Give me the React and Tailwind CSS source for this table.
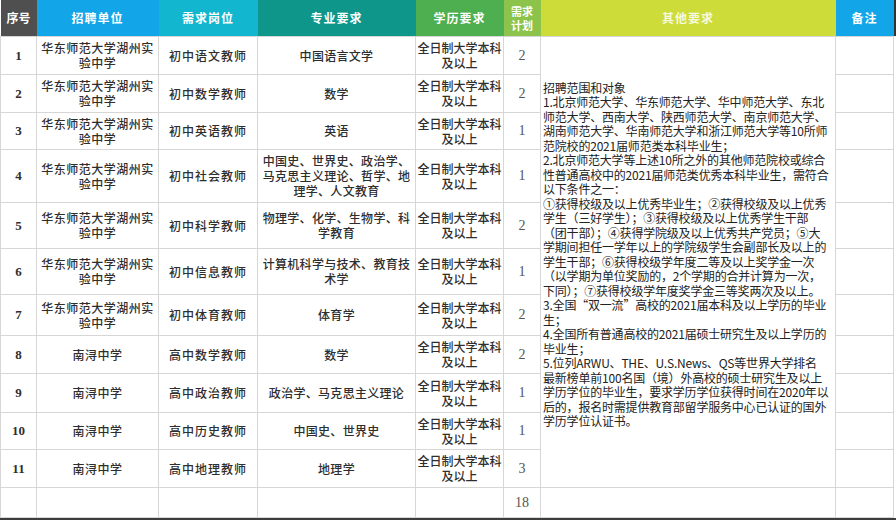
import React from "react";

const rows = [
  { no: 1, unit: ["华东师范大学湖州实", "验中学"], post: "初中语文教师", major: ["中国语言文学"], plan: 2, h: "h-[38px]" },
  { no: 2, unit: ["华东师范大学湖州实", "验中学"], post: "初中数学教师", major: ["数学"], plan: 2, h: "h-[38px]" },
  { no: 3, unit: ["华东师范大学湖州实", "验中学"], post: "初中英语教师", major: ["英语"], plan: 1, h: "h-[37px]" },
  {
    no: 4,
    unit: ["华东师范大学湖州实", "验中学"],
    post: "初中社会教师",
    major: ["中国史、世界史、政治学、", "马克思主义理论、哲学、地", "理学、人文教育"],
    plan: 1,
    h: "h-[53px]",
  },
  { no: 5, unit: ["华东师范大学湖州实", "验中学"], post: "初中科学教师", major: ["物理学、化学、生物学、科", "学教育"], plan: 2, h: "h-[46px]" },
  { no: 6, unit: ["华东师范大学湖州实", "验中学"], post: "初中信息教师", major: ["计算机科学与技术、教育技", "术学"], plan: 1, h: "h-[46px]" },
  { no: 7, unit: ["华东师范大学湖州实", "验中学"], post: "初中体育教师", major: ["体育学"], plan: 2, h: "h-[41px]" },
  { no: 8, unit: ["南浔中学"], post: "高中数学教师", major: ["数学"], plan: 2, h: "h-[38px]" },
  { no: 9, unit: ["南浔中学"], post: "高中政治教师", major: ["政治学、马克思主义理论"], plan: 1, h: "h-[39px]" },
  { no: 10, unit: ["南浔中学"], post: "高中历史教师", major: ["中国史、世界史"], plan: 1, h: "h-[37px]" },
  { no: 11, unit: ["南浔中学"], post: "高中地理教师", major: ["地理学"], plan: 3, h: "h-[38px]" },
];

const other = [
  "招聘范围和对象",
  "1.北京师范大学、华东师范大学、华中师范大学、东北",
  "师范大学、西南大学、陕西师范大学、南京师范大学、",
  "湖南师范大学、华南师范大学和浙江师范大学等10所师",
  "范院校的2021届师范类本科毕业生；",
  "2.北京师范大学等上述10所之外的其他师范院校或综合",
  "性普通高校中的2021届师范类优秀本科毕业生，需符合",
  "以下条件之一：",
  "①获得校级及以上优秀毕业生；②获得校级及以上优秀",
  "学生（三好学生）；③获得校级及以上优秀学生干部",
  "（团干部）；④获得学院级及以上优秀共产党员；⑤大",
  "学期间担任一学年以上的学院级学生会副部长及以上的",
  "学生干部；⑥获得校级学年度二等及以上奖学金一次",
  "（以学期为单位奖励的，2个学期的合并计算为一次，",
  "下同）；⑦获得校级学年度奖学金三等奖两次及以上。",
  "3.全国“双一流”高校的2021届本科及以上学历的毕业",
  "生；",
  "4.全国所有普通高校的2021届硕士研究生及以上学历的",
  "毕业生；",
  "5.位列ARWU、THE、U.S.News、QS等世界大学排名",
  "最新榜单前100名国（境）外高校的硕士研究生及以上",
  "学历学位的毕业生，要求学历学位获得时间在2020年以",
  "后的，报名时需提供教育部留学服务中心已认证的国外",
  "学历学位认证书。",
];

const cjk = { fontFamily: '"Noto Sans CJK SC", "Noto Sans", sans-serif' };
const serif = { fontFamily: '"Liberation Serif", "Noto Sans CJK SC", serif' };

const td = "border border-[#d6d6d6] text-center align-middle p-0 whitespace-nowrap overflow-hidden";

const Lines = ({ items }) =>
  items.map((t, i) => (
    <div key={i} className="whitespace-nowrap">
      {t}
    </div>
  ));

export default function App() {
  return (
    <div className="w-[896px] h-[520px] overflow-hidden bg-white flex flex-col" style={cjk}>
      <table className="table-fixed border-collapse w-[896px] text-[12px] leading-[15px] text-[#2e2e2e] font-medium">
        <colgroup>
          <col className="w-[36px]" />
          <col className="w-[122px]" />
          <col className="w-[99px]" />
          <col className="w-[158px]" />
          <col className="w-[88px]" />
          <col className="w-[37px]" />
          <col className="w-[295px]" />
          <col className="w-[58px]" />
          <col className="w-[3px]" />
        </colgroup>
        <thead>
          <tr className="h-[36px] text-white font-bold text-[12px]">
            <th className="bg-[#4f4f4f] p-0">序号</th>
            <th className="bg-[#12a6e9] p-0 tracking-[1px]">招聘单位</th>
            <th className="bg-[#12b6cf] p-0 tracking-[1px]">需求岗位</th>
            <th className="bg-[#0f968a] p-0 tracking-[1px]">专业要求</th>
            <th className="bg-[#4daf50] p-0 tracking-[1px]">学历要求</th>
            <th className="bg-[#8cc34b] p-0 text-[11px] leading-[14px] font-bold">
              <div>需求</div>
              <div>计划</div>
            </th>
            <th className="bg-[#cddc39] p-0 text-[#f6f9de] tracking-[1px]">其他要求</th>
            <th className="bg-[#12a6e9] p-0 tracking-[1px]">备注</th>
            <th className="bg-[#333333] p-0"></th>
          </tr>
        </thead>
        <tbody>
          {rows.map((r, i) => (
            <tr key={r.no} className={r.h}>
              <td className={`${td} font-bold text-[13px]`} style={serif}>
                {r.no}
              </td>
              <td className={`${td} tracking-[0.5px]`}>
                <Lines items={r.unit} />
              </td>
              <td className={`${td} tracking-[1px]`}>{r.post}</td>
              <td className={`${td} tracking-[0.3px]`}>
                <Lines items={r.major} />
              </td>
              <td className={td}>
                <div>全日制大学本科</div>
                <div>及以上</div>
              </td>
              <td className={`${td} text-[14px] text-[#555] font-normal`} style={serif}>
                {r.plan}
              </td>
              {i === 0 && (
                <td
                  rowSpan={11}
                  className="border border-[#d6d6d6] align-top text-left pt-[44px] pl-[2px] text-[12px] leading-[14.5px] text-[#222] font-normal tracking-[-0.2px]"
                >
                  <Lines items={other} />
                </td>
              )}
              <td className={td}></td>
              <td className="p-0"></td>
            </tr>
          ))}
          <tr className="h-[30px]">
            <td className={td}></td>
            <td className={td}></td>
            <td className={td}></td>
            <td className={td}></td>
            <td className={td}></td>
            <td className={`${td} text-[14px] text-[#555] font-normal`} style={serif}>
              18
            </td>
            <td className={td}></td>
            <td className={td}></td>
            <td className="p-0"></td>
          </tr>
        </tbody>
      </table>
      <div className="h-[3px] bg-[#3d3d3d] shrink-0"></div>
    </div>
  );
}
